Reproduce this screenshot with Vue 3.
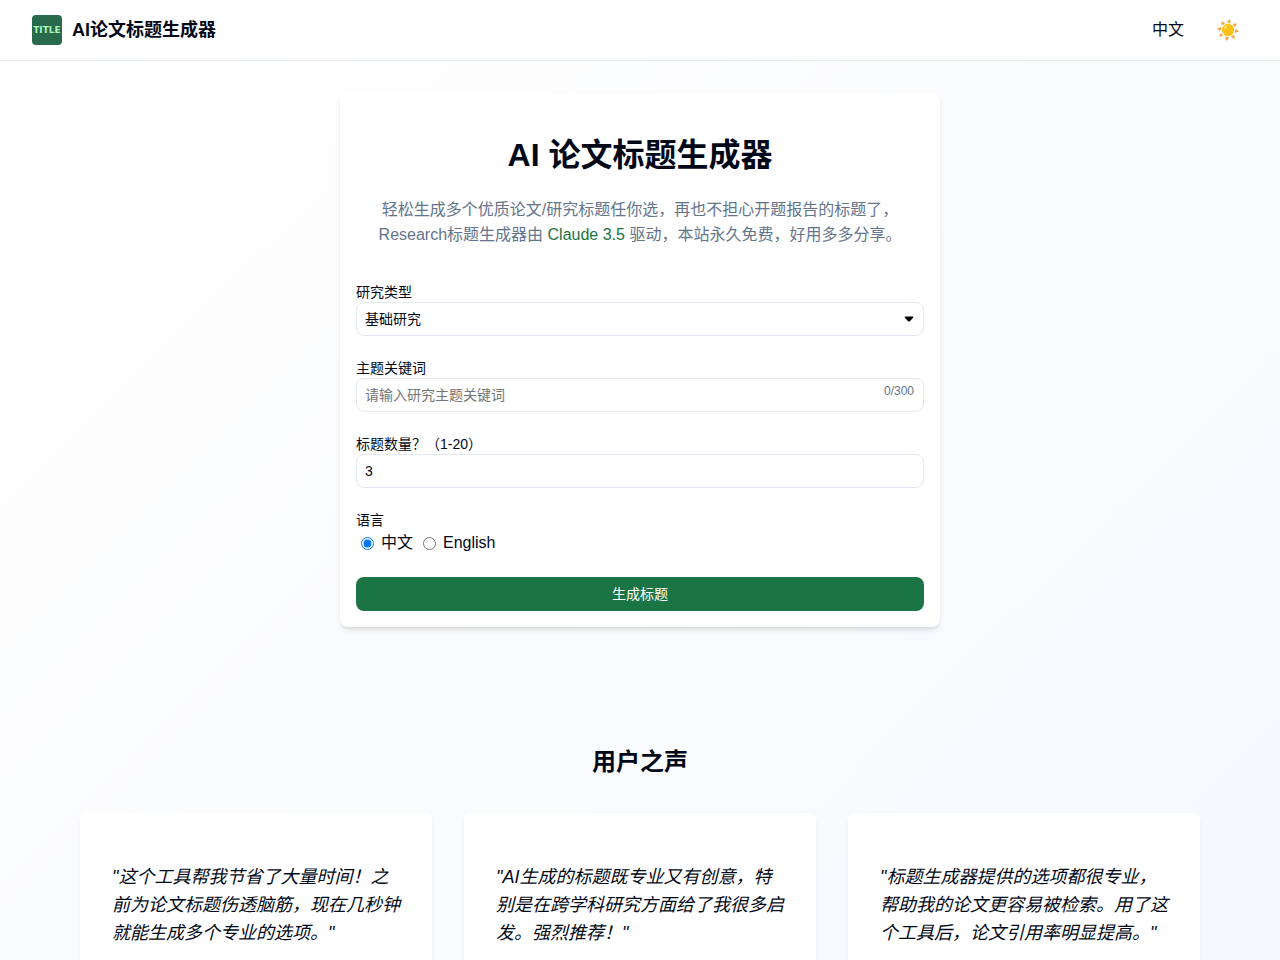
<script setup>
import { ref } from 'vue'

const researchType = ref('basic')
const keywords = ref('')
const count = ref(3)
const language = ref('zh')

const types = [
  { value: 'basic', label: '基础研究' },
  { value: 'applied', label: '应用研究' }
]

const voices = [
  '"这个工具帮我节省了大量时间！之前为论文标题伤透脑筋，现在几秒钟就能生成多个专业的选项。"',
  '"AI生成的标题既专业又有创意，特别是在跨学科研究方面给了我很多启发。强烈推荐！"',
  '"标题生成器提供的选项都很专业，帮助我的论文更容易被检索。用了这个工具后，论文引用率明显提高。"'
]

const rays = [8, 53, 98, 143, 188, 233, 278, 323]
</script>

<template>
  <div class="page">
    <header class="topbar">
      <a href="#" class="brand">
        <span class="logo">TITLE</span>
        <span class="brand-name">AI论文标题生成器</span>
      </a>
      <nav class="tools">
        <button type="button" class="lang">中文</button>
        <button type="button" class="theme" aria-label="切换主题">
          <svg viewBox="0 0 24 24" width="24" height="24" aria-hidden="true">
            <path
              v-for="angle in rays"
              :key="angle"
              d="M10 4.2 L12.2 0.8 L13.8 4.8 Q11.8 5.4 10 4.2Z"
              fill="#f2a33c"
              :transform="`rotate(${angle} 12 12)`"
            />
            <circle cx="12" cy="12" r="6.2" fill="#fcc21b" />
            <ellipse cx="9.4" cy="9.2" rx="1.9" ry="1.3" fill="#fde06a" transform="rotate(-40 9.4 9.2)" />
          </svg>
        </button>
      </nav>
    </header>

    <main>
      <section class="generator">
        <h1>AI 论文标题生成器</h1>
        <p class="intro">
          轻松生成多个优质论文/研究标题任你选，再也不担心开题报告的标题了，<br />Research标题生成器由
          <a href="#">Claude 3.5</a> 驱动，本站永久免费，好用多多分享。
        </p>
        <form @submit.prevent>
          <div class="field">
            <label for="type">研究类型</label>
            <div class="control">
              <select id="type" v-model="researchType">
                <option v-for="t in types" :key="t.value" :value="t.value">{{ t.label }}</option>
              </select>
              <svg class="caret" viewBox="0 0 10 6" width="10" height="6" aria-hidden="true">
                <path d="M1 0.5H9Q9.8 0.8 9 1.8L6 5.2Q5 6 4 5.2L1 1.8Q0.2 0.8 1 0.5Z" />
              </svg>
            </div>
          </div>
          <div class="field">
            <label for="keywords">主题关键词</label>
            <div class="control">
              <input id="keywords" v-model="keywords" type="text" maxlength="300" placeholder="请输入研究主题关键词" />
              <span class="counter">{{ keywords.length }}/300</span>
            </div>
          </div>
          <div class="field">
            <label for="count">标题数量？（1-20）</label>
            <input id="count" v-model="count" type="number" min="1" max="20" />
          </div>
          <fieldset class="field">
            <legend>语言</legend>
            <div class="options">
              <label><input v-model="language" type="radio" name="language" value="zh" />中文</label>
              <label><input v-model="language" type="radio" name="language" value="en" />English</label>
            </div>
          </fieldset>
          <button type="submit" class="submit">生成标题</button>
        </form>
      </section>

      <section class="voices">
        <h2>用户之声</h2>
        <div class="cards">
          <article v-for="voice in voices" :key="voice" class="card">
            <blockquote>{{ voice }}</blockquote>
          </article>
        </div>
      </section>
    </main>
  </div>
</template>

<style>
body {
  margin: 0;
}
</style>

<style scoped>
.page,
.page * {
  box-sizing: border-box;
}

.page {
  min-height: 100vh;
  color: #020817;
  font-family: "Liberation Sans", "Noto Sans CJK SC", sans-serif;
  font-size: 16px;
  line-height: 24px;
  background: linear-gradient(135deg, #ffffff, #f6f8fc);
}

button,
input,
select {
  color: inherit;
  font: inherit;
}

a {
  color: inherit;
  text-decoration: none;
}

.topbar {
  display: flex;
  align-items: center;
  justify-content: space-between;
  height: 61px;
  padding: 0 32px;
  background: #ffffff;
  border-bottom: 1px solid #e2e8f0;
}

.brand {
  display: flex;
  align-items: center;
  gap: 10px;
}

.logo {
  display: flex;
  align-items: center;
  justify-content: center;
  width: 30px;
  height: 30px;
  border-radius: 4px;
  background: #286a4b;
  color: #a9f5bd;
  font-family: "DejaVu Sans", sans-serif;
  font-size: 9px;
  font-weight: 700;
}

.brand-name {
  font-size: 18px;
  font-weight: 700;
}

.tools {
  display: flex;
  align-items: center;
  gap: 32px;
  padding-right: 8px;
}

.tools button {
  display: flex;
  padding: 0;
  border: 0;
  background: none;
}

main {
  padding: 32px 80px;
}

.generator {
  max-width: 600px;
  margin: 0 auto;
  padding: 40px 16px 16px;
  border-radius: 8px;
  background: #ffffff;
  box-shadow: 0 4px 6px -1px rgba(0, 0, 0, 0.1), 0 2px 4px -2px rgba(0, 0, 0, 0.1);
}

h1,
h2 {
  margin: 0;
  font-weight: 700;
  text-align: center;
}

h1 {
  font-size: 32px;
  line-height: 44px;
}

.intro {
  margin: 20px 0 35px;
  color: #64748b;
  line-height: 25px;
  text-align: center;
}

.intro a {
  color: #1b7444;
}

form {
  display: flex;
  flex-direction: column;
  gap: 22px;
}

.field {
  display: flex;
  flex-direction: column;
  min-width: 0;
  margin: 0;
  padding: 0;
  border: 0;
}

.field > label,
legend {
  padding: 0;
  font-size: 14px;
  line-height: 20px;
}

.control {
  position: relative;
  display: flex;
}

select,
input[type="text"],
input[type="number"] {
  width: 100%;
  height: 34px;
  padding: 0 8px;
  border: 1px solid #e2e8f0;
  border-radius: 8px;
  outline: 0;
  background: #ffffff;
  font-size: 14px;
  appearance: none;
}

input::placeholder {
  color: #757575;
}

.caret {
  position: absolute;
  top: 14px;
  right: 10px;
  pointer-events: none;
}

.counter {
  position: absolute;
  top: 5px;
  right: 10px;
  color: #64748b;
  font-size: 12px;
  line-height: 16px;
}

.options {
  display: flex;
  gap: 5px;
  padding-top: 1px;
}

.options label {
  display: flex;
  align-items: center;
}

.options input {
  width: 13px;
  height: 13px;
  margin: 0 7px 0 5px;
}

.submit {
  height: 34px;
  padding: 0;
  border: 0;
  border-radius: 8px;
  background: #1b7444;
  color: #ffffff;
  font-size: 14px;
}

.voices {
  max-width: 1120px;
  margin: 0 auto;
  padding-top: 119px;
}

h2 {
  font-size: 24px;
  line-height: 32px;
}

.cards {
  display: grid;
  grid-template-columns: repeat(3, 1fr);
  gap: 32px;
  margin-top: 35px;
}

.card {
  padding: 50px 32px;
  border-radius: 8px;
  background: #ffffff;
  box-shadow: 0 4px 6px -1px rgba(0, 0, 0, 0.06), 0 2px 4px -2px rgba(0, 0, 0, 0.06);
}

blockquote {
  margin: 0;
  font-size: 18px;
  font-style: italic;
  line-height: 28px;
}
</style>
